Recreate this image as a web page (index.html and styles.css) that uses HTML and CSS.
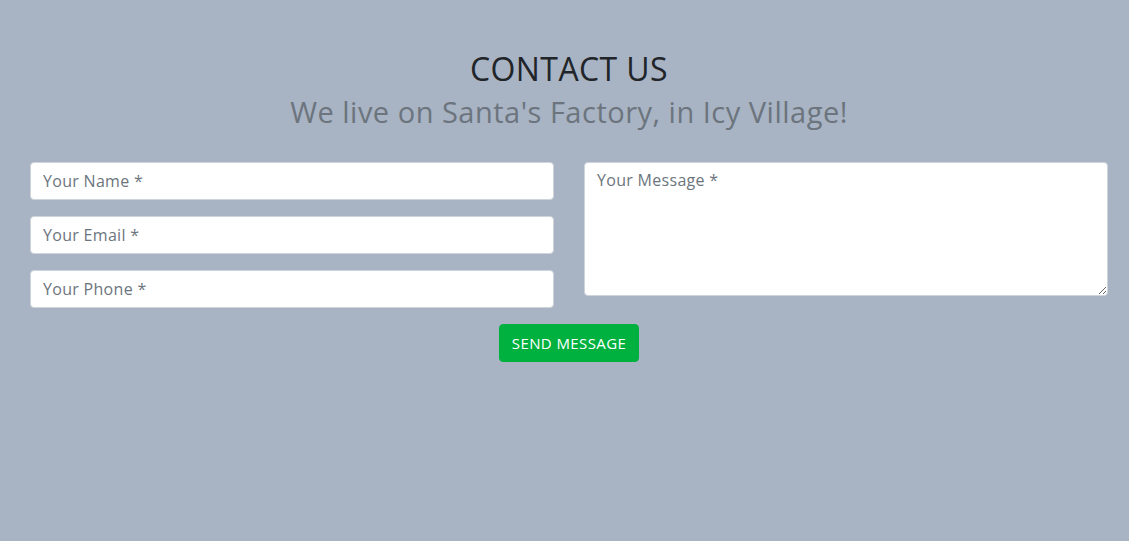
FILE: index.html
```html
<!DOCTYPE html>
<html lang="en">
<head>
<meta charset="utf-8">
<title>Contact Us</title>
<link rel="stylesheet" href="styles.css">
</head>
<body>
<section class="contact">
  <div class="heading">
    <h2 class="title">CONTACT US</h2>
    <h3 class="subtitle">We live on Santa's Factory, in Icy Village!</h3>
  </div>
  <form class="form">
    <div class="fields">
      <div class="col">
        <input class="control" type="text" placeholder="Your Name *">
        <input class="control" type="email" placeholder="Your Email *">
        <input class="control" type="tel" placeholder="Your Phone *">
      </div>
      <div class="col">
        <textarea class="control message" placeholder="Your Message *"></textarea>
      </div>
    </div>
    <div class="actions">
      <button class="send" type="button">SEND MESSAGE</button>
    </div>
  </form>
</section>
</body>
</html>
```

FILE: styles.css
```css
* { box-sizing: border-box; }
html, body { margin: 0; padding: 0; }
body {
  background: #a8b3c4;
  font-family: "Open Sans", "DejaVu Sans", sans-serif;
  width: 1129px;
  height: 541px;
  overflow: hidden;
}
.contact {
  padding: 50px 21px 0 30px;
}
.heading {
  text-align: center;
}
.title {
  margin: 0;
  font-size: 32px;
  font-weight: 400;
  line-height: 38px;
  letter-spacing: 0.4px;
  color: #212529;
}
.subtitle {
  margin: 7px 0 0;
  font-size: 29px;
  font-weight: 400;
  line-height: 34px;
  letter-spacing: 0.5px;
  color: #6c757d;
}
.form {
  margin-top: 33px;
}
.fields {
  display: flex;
  gap: 30px;
}
.col {
  flex: 1;
  display: flex;
  flex-direction: column;
  gap: 16px;
}
.control {
  display: block;
  width: 100%;
  height: 38px;
  padding: 6px 12px;
  font-family: inherit;
  font-size: 16px;
  letter-spacing: 0.3px;
  color: #495057;
  background: #fff;
  border: 1px solid #ced4da;
  border-radius: 4px;
  outline: none;
}
.control::placeholder { color: #6c757d; }
.message {
  height: 134px;
  resize: vertical;
}
.actions {
  display: flex;
  justify-content: center;
  margin-top: 16px;
}
.send {
  height: 38px;
  width: 140px;
  padding: 0;
  white-space: nowrap;
  font-family: inherit;
  font-size: 15px;
  font-weight: 500;
  letter-spacing: 0.4px;
  color: #fff;
  background: #00b140;
  border: 1px solid #00b140;
  border-radius: 4px;
}
```
